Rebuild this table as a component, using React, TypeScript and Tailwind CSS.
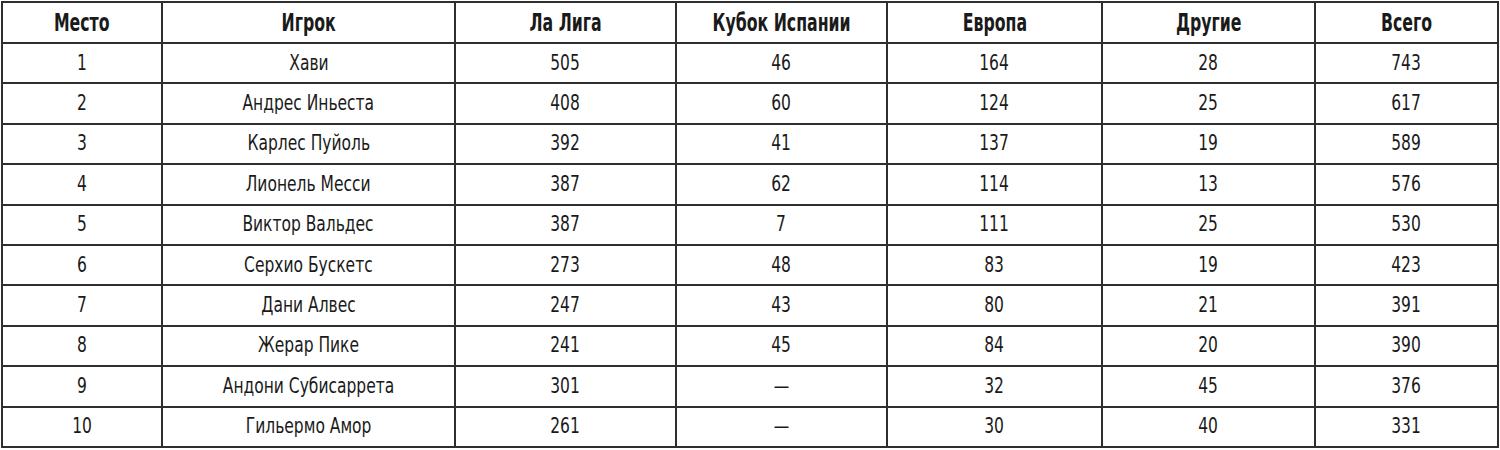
const rows = [
  ["1", "Хави", "505", "46", "164", "28", "743"],
  ["2", "Андрес Иньеста", "408", "60", "124", "25", "617"],
  ["3", "Карлес Пуйоль", "392", "41", "137", "19", "589"],
  ["4", "Лионель Месси", "387", "62", "114", "13", "576"],
  ["5", "Виктор Вальдес", "387", "7", "111", "25", "530"],
  ["6", "Серхио Бускетс", "273", "48", "83", "19", "423"],
  ["7", "Дани Алвес", "247", "43", "80", "21", "391"],
  ["8", "Жерар Пике", "241", "45", "84", "20", "390"],
  ["9", "Андони Субисаррета", "301", "—", "32", "45", "376"],
  ["10", "Гильермо Амор", "261", "—", "30", "40", "331"],
];

const headers = ["Место", "Игрок", "Ла Лига", "Кубок Испании", "Европа", "Другие", "Всего"];
const widths = ["w-[160px]", "w-[293px]", "w-[221px]", "w-[211px]", "w-[215px]", "w-[213px]", "w-[183px]"];

export default function App() {
  return (
    <div className="h-[450px] w-[1500px] bg-white pl-px pt-px text-[#1a1a1a] [font-family:'DejaVu_Sans_Condensed','Liberation_Sans',sans-serif]">
      <table className="w-[1497px] table-fixed border-collapse border-2 border-[#2e2e2e]">
        <thead>
          <tr className="h-[41px]">
            {headers.map((h, i) => (
              <th key={h} className={`${widths[i]} border-2 border-[#2e2e2e] p-0 text-center text-[25px] font-bold leading-none`}>
                <span className="inline-block scale-x-[0.7] whitespace-nowrap">{h}</span>
              </th>
            ))}
          </tr>
        </thead>
        <tbody>
          {rows.map((r) => (
            <tr key={r[0]} className="h-[40.4px]">
              {r.map((c, i) => (
                <td key={i} className="border-2 border-[#2e2e2e] p-0 text-center text-[21px] leading-none">
                  <span className="inline-block scale-x-[0.82] whitespace-nowrap">{c}</span>
                </td>
              ))}
            </tr>
          ))}
        </tbody>
      </table>
    </div>
  );
}
